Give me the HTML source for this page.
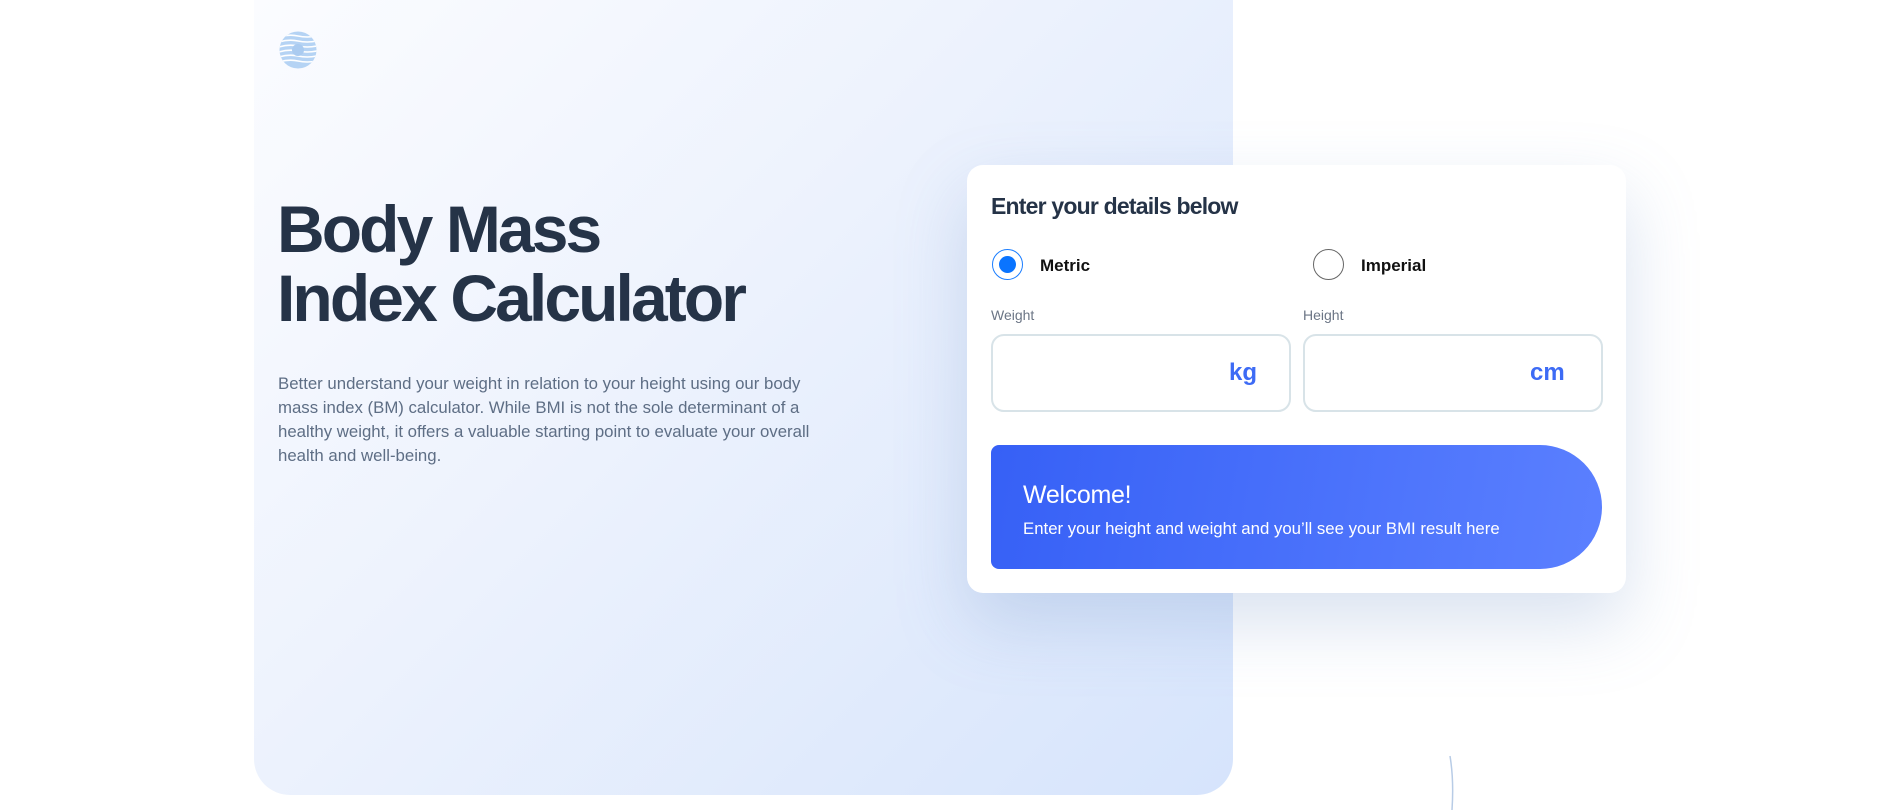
<!DOCTYPE html>
<html><head><meta charset="utf-8"><style>
*{margin:0;padding:0;box-sizing:border-box}
html,body{width:1896px;height:810px;overflow:hidden;background:#fff;font-family:"Liberation Sans",sans-serif}
.panel{position:absolute;left:254px;top:0;width:979px;height:795px;border-radius:0 0 36px 36px;background:linear-gradient(135deg,#fbfcff 0%,#eef3fd 40%,#d6e4fc 100%)}
.logo{position:absolute;left:279px;top:31px}
h1{position:absolute;left:277px;top:195px;font-size:66px;line-height:69px;font-weight:700;color:#253347;letter-spacing:-2.9px}
p.desc{position:absolute;left:278px;top:372px;width:552px;font-size:16.8px;line-height:24px;color:#5e6e85}
.card{position:absolute;left:967px;top:165px;width:659px;height:428px;background:#fff;border-radius:16px;box-shadow:0 30px 70px rgba(120,150,200,.28)}
.card h2{position:absolute;left:24px;top:28px;font-size:23px;font-weight:700;color:#253347;letter-spacing:-.8px}
.radio{position:absolute;top:84px;width:31px;height:31px;border-radius:50%}
.r1{left:25px;border:1.5px solid #1a7dff}
.r1:after{content:"";position:absolute;left:5.5px;top:5.5px;width:17px;height:17px;border-radius:50%;background:#0a74ff}
.r2{left:346px;border:1.5px solid #666}
.rl{position:absolute;top:91px;font-size:17px;font-weight:700;color:#111}
.lab{position:absolute;top:142px;font-size:14px;color:#6b7585}
.inp{position:absolute;top:169px;width:300px;height:78px;border:2px solid #d8e3e8;border-radius:13px}
.unit{position:absolute;top:23px;font-size:24px;font-weight:700;color:#3d6bf5}
.wel{position:absolute;left:24px;top:280px;width:611px;height:124px;border-radius:8px 62px 62px 8px;background:linear-gradient(100deg,#3660f6,#5b80ff);color:#fff}
.wel .t{position:absolute;left:32px;top:36px;font-size:25px;letter-spacing:-.3px}
.wel .s{position:absolute;left:32px;top:74px;font-size:16.8px}
</style></head><body>
<div class="panel"></div>
<svg class="logo" width="38" height="38" viewBox="0 0 38 38">
<defs><clipPath id="c"><circle cx="19" cy="19" r="18.5"/></clipPath></defs>
<circle cx="19" cy="19" r="18.5" fill="#b5d3f4"/>
<g clip-path="url(#c)" stroke="#fff" stroke-width="1.6" fill="none">
<path d="M0 6 Q10 3 19 5 T38 5"/><path d="M0 11 Q10 8 19 10 T38 10"/><path d="M0 16 Q10 13 19 15 T38 15"/><path d="M0 21 Q10 18 19 20 T38 20"/><path d="M0 26 Q10 23 19 25 T38 25"/><path d="M0 31 Q10 28 19 30 T38 30"/></g>
<circle cx="19" cy="19" r="6" fill="#aacbf0"/>
</svg>
<h1>Body Mass<br>Index Calculator</h1>
<p class="desc">Better understand your weight in relation to your height using our body mass index (BM) calculator. While BMI is not the sole determinant of a healthy weight, it offers a valuable starting point to evaluate your overall health and well-being.</p>
<div class="card">
<h2>Enter your details below</h2>
<div class="radio r1"></div><div class="rl" style="left:73px">Metric</div>
<div class="radio r2"></div><div class="rl" style="left:394px">Imperial</div>
<div class="lab" style="left:24px">Weight</div><div class="lab" style="left:336px">Height</div>
<div class="inp" style="left:24px"><span class="unit" style="left:236px">kg</span></div>
<div class="inp" style="left:336px"><span class="unit" style="left:225px">cm</span></div>
<div class="wel"><div class="t">Welcome!</div><div class="s">Enter your height and weight and you’ll see your BMI result here</div></div>
</div>
<svg style="position:absolute;left:1440px;top:750px" width="30" height="60"><path d="M10 6 Q14 30 12 60" stroke="#b8cce6" stroke-width="1.5" fill="none"/></svg>
</body></html>
